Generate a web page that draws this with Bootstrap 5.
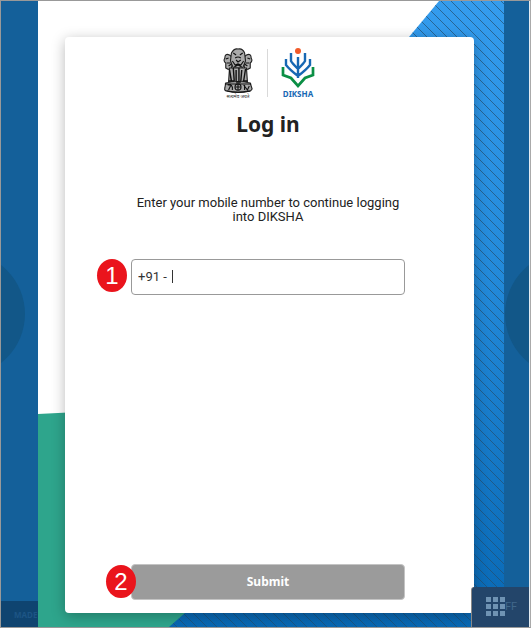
<!DOCTYPE html>
<html lang="en">
<head>
<meta charset="utf-8">
<meta name="viewport" content="width=device-width, initial-scale=1">
<title>DIKSHA – Log in</title>
<link href="https://cdn.jsdelivr.net/npm/bootstrap@5.3.0/dist/css/bootstrap.min.css" rel="stylesheet">
<style>
  body { font-family: Roboto, "Noto Sans", sans-serif; color: #222; }
  .frame { border: 1px solid #999; border-right-color: #aaa; }
  .side { background: #14609a; }
  .side-left { width: 37px; }
  .side-right { width: 26px; border-right: 1px solid #e4ecf2; }
  .disc { width: 124px; height: 124px; background: #125788; top: 251px; }
  .side-left .disc { right: 13px; }
  .side-right .disc { left: 1px; }
  .made { height: 26px; background: #0f4470; color: #1d5585; font: 700 8px/28px "Noto Sans", sans-serif; padding-left: 13px; }
  .stage { background: #fff; padding: 36px 30px 14px 27px; }
  .login-card { border-radius: 4px; box-shadow: 0 3px 14px rgba(0,0,0,.28); padding: 8px 69px 13px 66px; }
  .heading { font: 700 21px/30px "Noto Sans", sans-serif; margin-top: 8px; }
  .hint { font-size: 13px; line-height: 14px; margin-top: 57px; }
  .phone { margin-top: 35px; height: 36px; border: 1px solid #999; border-radius: 4px; padding: 0 6px 2px; font-size: 13px; color: #333; font-family: Roboto, "Noto Sans", sans-serif; }
  .phone:focus { outline: none; }
  .phone-wrap .caret { left: 41px; bottom: 12px; width: 1px; height: 13px; background: #333; }
  .submit { height: 36px; background: #9b9b9b; border: 1px solid #c4c4c4; border-radius: 4px; color: #fff; font: 700 12px/20px "Noto Sans", sans-serif; }
  .step { width: 30px; height: 33px; border-radius: 50%; background: #ea141c; color: #fff; font: 24px/33px "Liberation Sans", sans-serif; }
  .phone-wrap .step { left: -34px; bottom: 3px; }
  .submit-wrap .step { left: -25px; bottom: 2px; }
  .logos { gap: 13px; }
  .rule { width: 1px; height: 48px; background: #d9d9d9; margin-top: 4px; }
  .launcher { right: 1px; bottom: 0; width: 57px; height: 40px; background: #23456a; border: 0; border-top-left-radius: 3px; box-shadow: -1px 0 0 #888; color: #41688a; font: 11px/40px Roboto, sans-serif; padding: 0 0 0 14px; }
</style>
</head>
<body>
<div class="frame min-vh-100 d-flex position-relative overflow-hidden">
  <aside class="side side-left position-relative flex-shrink-0 d-flex flex-column justify-content-end overflow-hidden">
    <div class="disc rounded-circle position-absolute"></div>
    <div class="made position-relative text-nowrap">MADE</div>
  </aside>
  <main class="stage flex-grow-1 position-relative d-flex">
    <svg class="position-absolute top-0 start-0 w-100 h-100" viewBox="0 0 466 626" preserveAspectRatio="none" aria-hidden="true">
      <defs>
        <linearGradient id="sky" x1="0" y1="0" x2="0" y2="1"><stop offset="0" stop-color="#349cee"/><stop offset=".45" stop-color="#2289d9"/><stop offset="1" stop-color="#0868b4"/></linearGradient>
        <pattern id="lines" width="10" height="10" patternUnits="userSpaceOnUse" patternTransform="translate(6 3)"><path d="M-1-1L11 11M-1 9L1 11M9-1L11 1" stroke="#234e70" stroke-opacity=".7"/></pattern>
      </defs>
      <path d="M401 0L361 48L130 626H466V0Z" fill="url(#sky)"/>
      <path d="M401 0L361 48L130 626H466V0Z" fill="url(#lines)"/>
      <path d="M0 413L40 411L190 560V567L147 612L131 626H0Z" fill="#2ea58c"/>
    </svg>
    <form class="login-card bg-white position-relative flex-grow-1 d-flex flex-column" onsubmit="return false">
      <div class="logos d-flex justify-content-center align-items-start">
        <svg width="32" height="56" viewBox="0 -3 34 56" preserveAspectRatio="none" role="img" aria-label="State emblem">
          <g fill="#aaa" stroke="#222" stroke-width="1.2">
            <path d="M8 7Q3 5 3 10Q1 13 4 15L4 20Q9 23 10 20L12 10Z"/>
            <path d="M26 7Q31 5 31 10Q33 13 30 15L30 20Q25 23 24 20L22 10Z"/>
            <path d="M10 5Q13 0 17 1Q22 0 24 5L25 13L22 20H12L9 13Z"/>
            <path d="M8 20H26L27 34H7Z"/>
            <path d="M4 35Q17 32 30 35L32 41Q30 44 28 43Q17 45 6 43Q2 43 3 40Z"/>
          </g>
          <g fill="none" stroke="#111" stroke-width="1.2">
            <path d="M12 5L15 7M22 5L19 7M14 10Q17 8 20 10M15 12L17 14L20 12M11 13L14 17L17 16L20 17L23 13M13 19L17 17L21 19M4 11L7 10M30 11L27 10M5 15L9 15M29 15L25 15M7 18L10 16M27 18L24 16"/>
            <path d="M8 22L10 33M12 20L13 33M15 22V33M18 20V33M21 22L20 33M25 21L23 33M7 33H13M15 34H20M22 33H27" stroke-width="1.5"/>
            <circle cx="17" cy="39" r="3.2"/><path d="M17 36V42M14 39H20M6 37Q12 36 11 42M7 42L9 38M23 37L27 42L29 38M24 42V37M5 43Q17 46 30 43M3 36H31"/>
          </g>
          <text x="17" y="50" text-anchor="middle" font-size="5" font-family="Noto Sans, sans-serif" fill="#222">सत्यमेव जयते</text>
        </svg>
        <span class="rule"></span>
        <svg width="34" height="56" viewBox="3 0 34 56" role="img" aria-label="DIKSHA">
          <circle cx="20" cy="6" r="3" fill="#f15a29"/>
          <path d="M13 8V16Q14 18 20 24Q26 18 27 16V8M8 14V20Q12 25 20 31Q28 25 32 20V14M20 12V33" fill="none" stroke="#1768b3" stroke-width="2.4"/>
          <path d="M5 22V30L13 33L20 41L27 33L35 30V22" fill="none" stroke="#0b8f45" stroke-width="2.7"/>
          <text x="20" y="52" text-anchor="middle" font-family="Noto Sans, sans-serif" font-weight="700" font-size="8" fill="#1768b3">DIKSHA</text>
        </svg>
      </div>
      <h1 class="heading text-center mb-0">Log in</h1>
      <label class="hint text-center" for="phone">Enter your mobile number to continue logging into DIKSHA</label>
      <div class="phone-wrap position-relative">
        <input class="phone w-100 bg-white" id="phone" type="tel" value="+91 -">
        <span class="caret position-absolute"></span>
        <span class="step position-absolute text-center">1</span>
      </div>
      <div class="submit-wrap position-relative mt-auto">
        <button class="submit w-100" type="submit">Submit</button>
        <span class="step position-absolute text-center">2</span>
      </div>
    </form>
  </main>
  <aside class="side side-right position-relative flex-shrink-0 overflow-hidden">
    <div class="disc rounded-circle position-absolute"></div>
  </aside>
  <button class="launcher position-absolute d-flex align-items-center" type="button" aria-label="Open menu">
    <svg class="flex-shrink-0" width="19" height="20" viewBox="0 0 19 20" fill="#6f93b3" aria-hidden="true"><path d="M0 0h5v5H0zM7 0h5v5H7zM14 0h5v5h-5zM0 7h5v5H0zM7 7h5v5H7zM14 7h5v5h-5zM0 14h5v5H0zM7 14h5v5H7zM14 14h5v5h-5z"/></svg>
    FF
  </button>
</div>
<script src="https://cdn.jsdelivr.net/npm/bootstrap@5.3.0/dist/js/bootstrap.bundle.min.js"></script>
</body>
</html>
